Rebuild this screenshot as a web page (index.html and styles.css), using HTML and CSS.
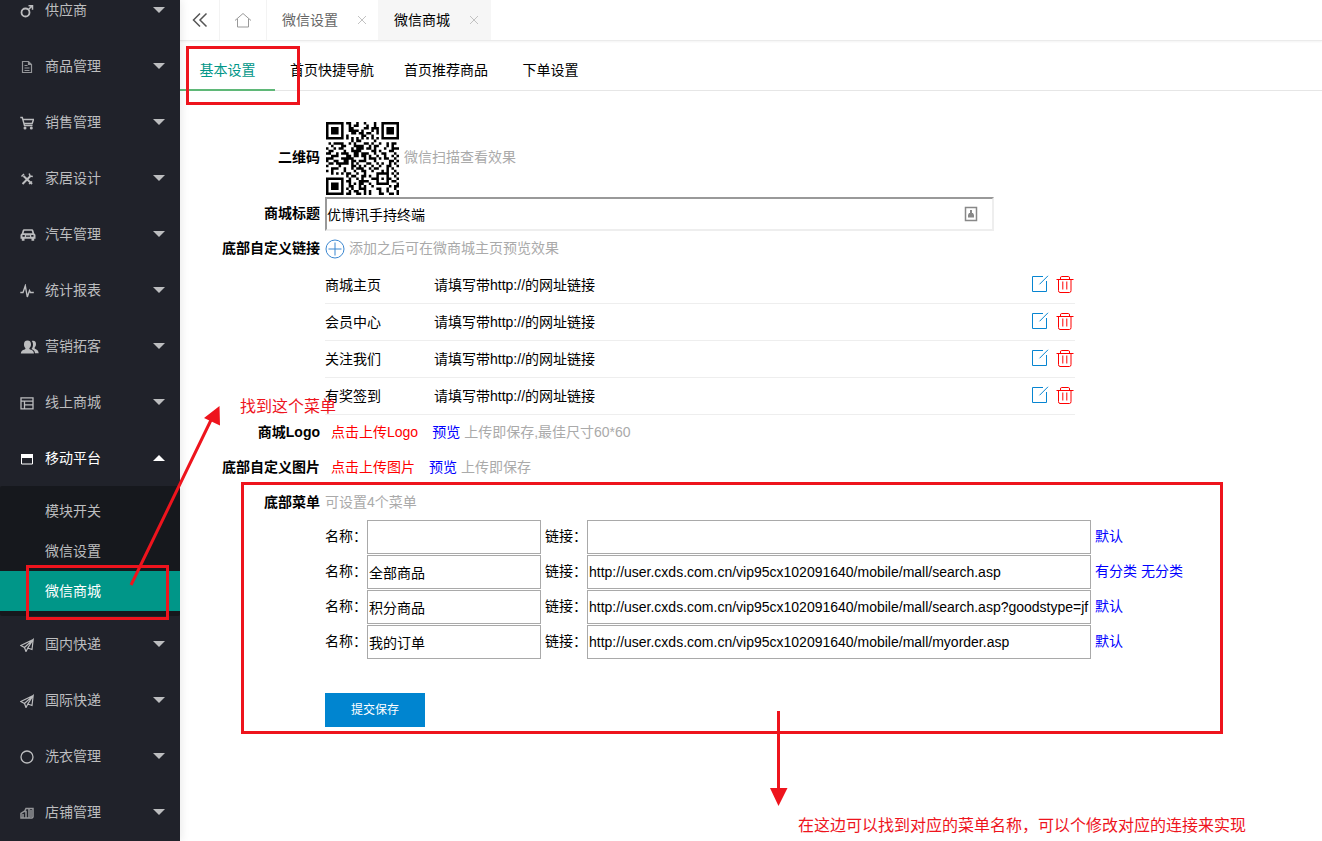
FILE: index.html
```html
<!DOCTYPE html>
<html lang="zh-CN">
<head>
<meta charset="utf-8">
<title>微信商城</title>
<link rel="stylesheet" href="styles.css">
</head>
<body>
<svg class="defs" aria-hidden="true">
  <symbol id="i-edit" viewBox="0 0 18 18"><path d="M12 1.500H1.500v15h14V6M17 .8 8.500 9.300"/></symbol>
  <symbol id="i-trash" viewBox="0 0 18 18"><path d="M.5 4.500h17M4.500 4V3q0-1.500 1-1.500h7q1 0 1 1.500v1M2.500 4.500v11q0 2 1.500 2h9.500q1.500 0 1.500-2v-11M6.800 6.500v8M10.800 6.500v8"/></symbol>
  <symbol id="i-plane" viewBox="0 0 14 14"><path stroke-width="1.200" d="M13.200 1.500.8 7.500l3.700 2L13.200 1.500 12 11.500 7.800 10 13.200 1.500M4.500 9.500l1.500 4L7.800 10"/></symbol>
</svg>
<div class="app">
  <aside class="side">
    <nav class="nav">
      <a class="item" href="#"><svg class="ico" viewBox="0 0 14 14"><circle cx="5.500" cy="8.500" r="4" stroke-width="1.800"/><path stroke-width="1.500" d="M8.500 5.500 12 2M8.500 1.700h4v4"/></svg>供应商<i class="caret"></i></a>
      <a class="item" href="#"><svg class="ico dim" viewBox="0 0 14 14"><path stroke-width="1.200" d="M2.500 1.500h6l3 3v8h-9zM8.500 1.500v3h3M4.500 5.500h3M4.500 8h5M4.500 10.500h5"/></svg>商品管理<i class="caret"></i></a>
      <a class="item" href="#"><svg class="ico" viewBox="0 0 14 14"><path stroke-width="1.400" d="M.3 1.500h2L4.500 9.500h8M3 3.500h10.500l-1.300 4H4.200"/><circle class="solid" cx="5" cy="12" r="1.500"/><circle class="solid" cx="11.300" cy="12" r="1.500"/></svg>销售管理<i class="caret"></i></a>
      <a class="item" href="#"><svg class="ico" viewBox="0 0 14 14"><path stroke-width="2" d="M3.500 4 12 12M10.500 4 2.500 12"/><path stroke-width="1.500" d="M1.500 4.500 4 2M9.200 1.500l.8 2.500 2.800.5M9 12l3-2.500"/></svg>家居设计<i class="caret"></i></a>
      <a class="item" href="#"><svg class="ico wide" viewBox="0 0 16 14"><path class="solid" fill-rule="evenodd" d="M4 1.300h8q1 0 1.300 1l1 3.200q1.200.5 1.200 1.800v3.500h-1.300v2h-2.700v-2h-7v2H1.800v-2H.5V7.300Q.5 6 1.700 5.500l1-3.200q.3-1 1.300-1zM4.300 2.800 3.600 5.300h8.800l-.7-2.500zM2.500 7v1.800h2.300V7zM11.200 7v1.800h2.300V7zM6 7.500v1.200h4V7.500z"/></svg>汽车管理<i class="caret"></i></a>
      <a class="item" href="#"><svg class="ico" viewBox="0 0 14 14"><path stroke-width="1.400" d="M.3 8.500H3L5.300 1.800 7.300 13l2.200-6.500 1 2h3.300"/></svg>统计报表<i class="caret"></i></a>
      <a class="item" href="#"><svg class="ico people" viewBox="0 0 19 14"><path class="solid" d="M13 .7c2.300 0 3 1.600 3 3.300s-.6 2.700-1.300 3.400c-.4.600 0 1.200.8 1.500 1.900.8 3 1.800 3.200 4.300H15c-.3-2.600-1.500-3.400-3.500-4.200 1-1.200 1.500-2.700 1.500-4.500 0-1.500-.5-2.700-1.200-3.500.4-.2.800-.3 1.200-.3zM7.500.5C10 .5 11 2.200 11 4.200c0 1.800-.6 3-1.500 3.800-.4.600 0 1.200.7 1.500 2.200.8 3.600 1.500 3.800 4H.8c.2-2.500 1.600-3.200 3.800-4 .8-.3 1.100-.9.700-1.500C4.400 7.200 4 6 4 4.200 4 2.200 5 .5 7.500.5z"/></svg>营销拓客<i class="caret"></i></a>
      <a class="item" href="#"><svg class="ico" viewBox="0 0 14 14"><path stroke-width="1.300" d="M1 1.800h12v11H1zM1 5.200h12M4.500 5.500v7M4.500 8.800H13"/></svg>线上商城<i class="caret"></i></a>
      <a class="item open" href="#"><svg class="ico" viewBox="0 0 14 14"><path d="M1.500 3h11v9h-11z"/><path class="solid" d="M1 2h12v4H1z"/></svg>移动平台<i class="caret up"></i></a>
      <div class="sub">
        <a class="subitem" href="#">模块开关</a>
        <a class="subitem" href="#">微信设置</a>
        <a class="subitem current" href="#">微信商城</a>
      </div>
      <a class="item" href="#"><svg class="ico"><use href="#i-plane"/></svg>国内快递<i class="caret"></i></a>
      <a class="item" href="#"><svg class="ico"><use href="#i-plane"/></svg>国际快递<i class="caret"></i></a>
      <a class="item" href="#"><svg class="ico" viewBox="0 0 14 14"><circle cx="7" cy="7" r="6" stroke-width="1.300"/></svg>洗衣管理<i class="caret"></i></a>
      <a class="item" href="#"><svg class="ico dim" viewBox="0 0 14 14"><path stroke-width="1.500" d="M1 12V7.500l3-2h2V12zM3 8v4M4.500 5.500 6 2.500h3V12H6M9 2.500h4V11l-1 1H9M11 4v7"/></svg>店铺管理<i class="caret"></i></a>
    </nav>
  </aside>
  <main class="main">
    <header class="pages">
      <button class="tool fold" aria-label="收起"><svg viewBox="0 0 16 16"><path stroke-width="1.500" d="M8 1.500 1.500 8 8 14.500M14.500 1.500 8 8l6.500 6.500"/></svg></button>
      <button class="tool home" aria-label="主页"><svg viewBox="0 0 18 16"><path d="M1 8.500 9 1.500l8 7M3.500 7v8h11V7"/></svg></button>
      <div class="page"><a href="#">微信设置</a><button class="close" aria-label="关闭"><svg viewBox="0 0 10 10"><path d="m1 1 8 8M9 1 1 9"/></svg></button></div>
      <div class="page on"><a href="#">微信商城</a><button class="close" aria-label="关闭"><svg viewBox="0 0 10 10"><path d="m1 1 8 8M9 1 1 9"/></svg></button></div>
    </header>
    <nav class="tabs">
      <a class="tab active" href="#">基本设置</a>
      <a class="tab" href="#">首页快捷导航</a>
      <a class="tab" href="#">首页推荐商品</a>
      <a class="tab" href="#">下单设置</a>
    </nav>
    <form class="form">
      <div class="row code">
        <span class="label">二维码</span>
        <div class="field"><svg class="qr" id="qr" viewBox="0 0 29 29" role="img" aria-label="二维码"></svg><span class="hint">微信扫描查看效果</span></div>
      </div>
      <div class="row">
        <label class="label" for="title">商城标题</label>
        <div class="field title"><input id="title" type="text" value="优博讯手持终端"><svg class="card" viewBox="0 0 14 16"><path d="M1.500 1.500h11v13h-11z" stroke-width="1.500"/><path class="solid" d="M6 4h2v3h1l1 2v2.500H4V9l1-2h1z"/></svg></div>
      </div>
      <div class="row">
        <span class="label">底部自定义链接</span>
        <div class="field"><button class="add" type="button" aria-label="添加"><svg viewBox="0 0 20 20"><circle cx="10" cy="10" r="9"/><path d="M10 3.500v13M3.500 10h13"/></svg></button><span class="hint">添加之后可在微商城主页预览效果</span></div>
      </div>
      <table class="links">
        <tr><td class="name">商城主页</td><td>请填写带http://的网址链接</td><td class="ops"><button type="button" class="edit" aria-label="编辑"><svg><use href="#i-edit"/></svg></button><button type="button" class="del" aria-label="删除"><svg><use href="#i-trash"/></svg></button></td></tr>
        <tr><td class="name">会员中心</td><td>请填写带http://的网址链接</td><td class="ops"><button type="button" class="edit" aria-label="编辑"><svg><use href="#i-edit"/></svg></button><button type="button" class="del" aria-label="删除"><svg><use href="#i-trash"/></svg></button></td></tr>
        <tr><td class="name">关注我们</td><td>请填写带http://的网址链接</td><td class="ops"><button type="button" class="edit" aria-label="编辑"><svg><use href="#i-edit"/></svg></button><button type="button" class="del" aria-label="删除"><svg><use href="#i-trash"/></svg></button></td></tr>
        <tr><td class="name">有奖签到</td><td>请填写带http://的网址链接</td><td class="ops"><button type="button" class="edit" aria-label="编辑"><svg><use href="#i-edit"/></svg></button><button type="button" class="del" aria-label="删除"><svg><use href="#i-trash"/></svg></button></td></tr>
      </table>
      <div class="row">
        <span class="label">商城Logo</span>
        <div class="field"><a class="upload" href="#">点击上传Logo</a><a class="link" href="#">预览</a><span class="hint">上传即保存,最佳尺寸60*60</span></div>
      </div>
      <div class="row">
        <span class="label">底部自定义图片</span>
        <div class="field"><a class="upload" href="#">点击上传图片</a><a class="link" href="#">预览</a><span class="hint">上传即保存</span></div>
      </div>
      <div class="row">
        <span class="label">底部菜单</span>
        <div class="field"><span class="hint">可设置4个菜单</span></div>
      </div>
      <div class="menus">
        <div class="menu"><label for="n1">名称：</label><input id="n1" class="short" type="text"><label for="u1">链接：</label><input id="u1" class="long" type="text"><a class="link" href="#">默认</a></div>
        <div class="menu"><label for="n2">名称：</label><input id="n2" class="short" type="text" value="全部商品"><label for="u2">链接：</label><input id="u2" class="long" type="text" value="http://user.cxds.com.cn/vip95cx102091640/mobile/mall/search.asp"><a class="link" href="#">有分类</a><a class="link" href="#">无分类</a></div>
        <div class="menu"><label for="n3">名称：</label><input id="n3" class="short" type="text" value="积分商品"><label for="u3">链接：</label><input id="u3" class="long" type="text" value="http://user.cxds.com.cn/vip95cx102091640/mobile/mall/search.asp?goodstype=jf"><a class="link" href="#">默认</a></div>
        <div class="menu"><label for="n4">名称：</label><input id="n4" class="short" type="text" value="我的订单"><label for="u4">链接：</label><input id="u4" class="long" type="text" value="http://user.cxds.com.cn/vip95cx102091640/mobile/mall/myorder.asp"><a class="link" href="#">默认</a></div>
      </div>
      <button class="submit" type="button">提交保存</button>
    </form>
  </main>
</div>
<div class="marks">
  <div class="box box-tab"></div>
  <div class="box box-side"></div>
  <div class="box box-menu"></div>
  <svg class="arrows" viewBox="0 0 1322 841" width="1322" height="841"><path d="M131 585 212 418M778.500 711v80" stroke="#ee141d" stroke-width="3"/><path d="m219.500 406-15.500 12 16 7.500zM770 788h17.500l-9 18z" fill="#ee141d" stroke="none"/></svg>
  <p class="note note-find">找到这个菜单</p>
  <p class="note note-edit">在这边可以找到对应的菜单名称，可以个修改对应的连接来实现</p>
</div>
<script src="qr.js"></script>
</body>
</html>
```
FILE: styles.css
```css
* { box-sizing: border-box; }
body {
  margin: 0;
  background: #fff;
  color: #000;
  font: 14px/20px "Liberation Sans", "Noto Sans CJK SC", sans-serif;
}
a { color: inherit; text-decoration: none; }
button { padding: 0; border: 0; background: none; font: inherit; }
input { font: inherit; color: #000; }
svg { display: block; fill: none; stroke: currentColor; }
.solid { fill: currentColor; stroke: none; }
.defs { position: absolute; width: 0; height: 0; }

.app { display: flex; height: 100vh; overflow: hidden; }
.side {
  flex: 0 0 180px;
  overflow: hidden;
  background: #20222a;
  color: #bcbdbf;
  box-shadow: 2px 0 8px rgba(0, 0, 0, .08);
  z-index: 1;
}
.nav { margin-top: -18px; }
.item { display: flex; align-items: center; height: 56px; padding: 0 15px 0 20px; }
.item.open { color: #fff; }
.ico { width: 14px; height: 14px; margin: 1px 11px 0 0; }
.ico.wide { width: 16px; margin-right: 9px; }
.ico.people { width: 19px; margin-right: 6px; }
.ico.dim { opacity: .75; }
.caret {
  margin-left: auto;
  border: 6px solid transparent;
  border-bottom: 0;
  border-top-color: currentColor;
}
.caret.up { border-bottom: 6px solid currentColor; border-top: 0; }
.sub { padding: 5px 0; background: #16181d; border-radius: 2px; }
.subitem { display: block; padding-left: 45px; line-height: 40px; }
.subitem.current { background: #009688; color: #fff; }

.main { flex: 1; min-width: 0; }
.pages {
  display: flex;
  height: 41px;
  border-bottom: 1px solid #ebebeb;
  box-shadow: 0 1px 2px rgba(0, 0, 0, .05);
}
.tool { display: grid; place-items: center; border-right: 1px solid #f3f3f3; color: #555; }
.fold { width: 40px; }
.fold svg { width: 16px; height: 16px; }
.home { width: 47px; color: #999; }
.home svg { width: 18px; height: 16px; }
.page {
  display: flex;
  align-items: center;
  gap: 19px;
  padding: 0 11px 0 15px;
  border-right: 1px solid #f6f6f6;
  color: #666;
}
.page.on { background: #f6f6f6; color: #000; }
.close { color: #c2c2c2; }
.close svg { width: 10px; height: 10px; }

.tabs { display: flex; height: 50px; border-bottom: 1px solid #e6e6e6; }
.tab { min-width: 95px; height: 50px; padding: 0 15px; line-height: 58px; text-align: center; }
.tab.active { color: #009688; border-bottom: 2px solid #5fb878; }

.form { padding-top: 29px; }
.row { display: flex; align-items: center; gap: 5px; min-height: 35px; }
.row.code { min-height: 76px; }
.label, .hint, .upload, .link, .menu label { padding-bottom: 2px; }
.label { flex: 0 0 140px; text-align: right; font-weight: bold; }
.field { display: flex; align-items: center; gap: 4px; }
.qr { width: 75px; height: 75px; padding: 1px; }
.qr path { fill: #000; stroke: none; }
.hint { color: #aaa; }
.title { flex: 0 1 669px; position: relative; }
.title input { width: 100%; height: 34px; padding: 1px 0; border: 2px solid; border-color: #999 #eee #eee #999; }
.card { position: absolute; right: 16px; top: 9px; width: 14px; height: 16px; color: #888; }
.add { color: #3b87d0; }
.add svg { width: 20px; height: 20px; }
.links { width: 750px; margin: 1px 0 0 145px; border-spacing: 0; }
.links td { height: 37px; padding: 0; border-bottom: 1px solid #eee; }
.links .name { width: 109px; }
.links .ops { width: 44px; padding-bottom: 2px; line-height: 0; }
.ops button { display: inline-block; margin-right: 7px; vertical-align: middle; }
.ops button:last-child { margin-right: 0; }
.ops svg { width: 18px; height: 18px; }
.edit { color: #0785d1; }
.del { color: #f00; }
.upload { margin: 0 10px 0 6px; color: #f00; }
.link { color: #00f; }
.menus { display: grid; gap: 1px; padding-left: 145px; }
.menu { display: flex; align-items: center; gap: 4px; }
.menu label { margin-right: -4px; white-space: nowrap; }
.menu input { height: 34px; padding: 1px; border: 1px solid #a9a9a9; }
.short { width: 174px; }
.long { width: 504px; }
.submit { width: 100px; height: 34px; margin: 34px 0 0 145px; background: #0085d0; color: #fff; font-size: 12px; }

.marks { position: absolute; inset: 0; overflow: hidden; pointer-events: none; z-index: 2; }
.box { position: absolute; border: 3px solid #ee141d; }
.box-tab { left: 186px; top: 46px; width: 114px; height: 59px; }
.box-side { left: 26px; top: 565px; width: 143px; height: 55px; }
.box-menu { left: 241px; top: 482px; width: 982px; height: 252px; }
.arrows { position: absolute; left: 0; top: 0; }
.note { position: absolute; margin: 0; color: #ee141d; font-size: 16px; line-height: 20px; white-space: nowrap; }
.note-find { left: 240px; top: 397px; }
.note-edit { left: 798px; top: 816px; }
```
FILE: qr.js
```js
const rows = [
  "#######.##..#..#...#..#######",
  "#.....#..#.##...#..#..#.....#",
  "#.###.#..##....##.###.#.###.#",
  "#.###.#..####.#...#.#.#.###.#",
  "#.###.#...##.##.##..#.#.###.#",
  "#.....#.#.....##..#...#.....#",
  "#######.#.#.#.#.#.#.#.#######",
  "..........#.##.....#.........",
  ".#.####..#.#...##.#..#..#.##.",
  "..#...##...####..#.##...#.#..",
  "#..#.##...#.###.##.#...#..###",
  ".##....#..####....##.#...##..",
  "##..#.###..##.###..#..##...#.",
  "..###...##.##.##.#..#..#..#.#",
  "###...#####....#.###.#.##..#.",
  "#..##..##.##.###...#.....##.#",
  ".##.#####.#.#...##..#.#..#.#.",
  "#....#....##.#.#..#..#..##..#",
  "..###..#..#.###..#.##...#.#..",
  "#.#....#...#..##..#...#.#..#.",
  "..#.#.#.##..#..#....#####.#.#",
  "........#.##..##.#..#...#..#.",
  "#######..#..#.#...###.#.##..#",
  "#.....#.##...####...#...#.##.",
  "#.###.#..#.#.##..#..#####...#",
  "#.###.#..##..#.#..#......#.##",
  "#.###.#.#.#..###....##..#..#.",
  "#.....#..#.##..#.#...#..#...#",
  "#######.##..##.#.#...##..##.#"
];
let d = "";
rows.forEach((row, y) => {
  for (const run of row.matchAll(/#+/g)) {
    const n = run[0].length;
    d += `M${run.index} ${y}h${n}v1h-${n}z`;
  }
});
const path = document.createElementNS("http://www.w3.org/2000/svg", "path");
path.setAttribute("d", d);
document.getElementById("qr").append(path);
```
